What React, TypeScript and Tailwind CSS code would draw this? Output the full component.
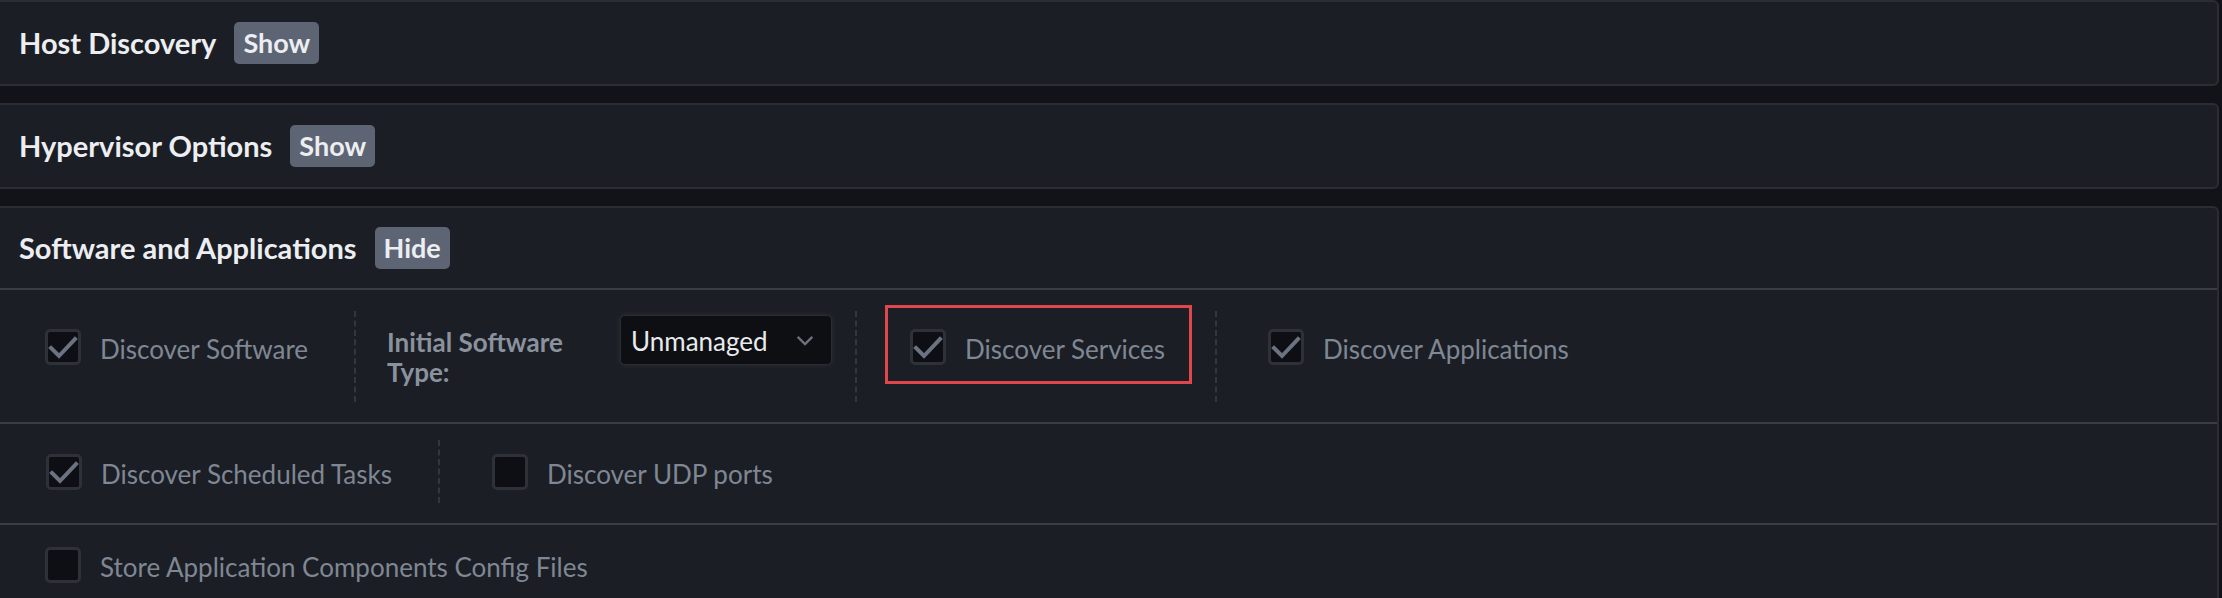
import { ReactNode } from 'react'

const labelFont = { fontFamily: 'Lato, "Noto Sans", sans-serif' }

function Badge({ children }: { children: ReactNode }) {
  return (
    <span className="inline-flex h-[42px] items-center rounded-[5px] bg-[#5d6474] px-[9px] text-[27px] font-bold text-[#eceef1]">
      {children}
    </span>
  )
}

function SectionHeader({ title, action, h = 'h-[82px]' }: { title: string; action: string; h?: string }) {
  return (
    <div className={`flex items-center gap-[18px] pl-[19px] ${h}`}>
      <h2 className="text-[29px] font-bold text-[#eceef1]">{title}</h2>
      <Badge>{action}</Badge>
    </div>
  )
}

function Checkbox({ checked }: { checked?: boolean }) {
  return (
    <span className="flex h-[36px] w-[36px] shrink-0 items-center justify-center rounded-[5px] border-[3px] border-[#2e3137] bg-[#0e0f14]">
      {checked && (
        <svg viewBox="0 0 30 30" className="h-[30px] w-[30px]">
          <polyline points="3,16 11,24 27,7" fill="none" stroke="#6b7280" strokeWidth="4" strokeLinecap="square" />
        </svg>
      )}
    </span>
  )
}

function CheckItem({ label, checked }: { label: string; checked?: boolean }) {
  return (
    <div className="flex items-center gap-[19px]">
      <Checkbox checked={checked} />
      <span className="pt-[6px] text-[26px] text-[#7f8793]">{label}</span>
    </div>
  )
}

function Divider({ h }: { h: string }) {
  return <div className={`w-0 self-start border-l-2 border-dashed border-[#33363c] ${h}`} />
}

export default function App() {
  return (
    <div className="h-[598px] w-[2222px] overflow-hidden bg-[#111318]" style={labelFont}>
      <div className="flex flex-col gap-[17px] pr-[3px]">
        <section className="rounded-r-[6px] border-y-2 border-r-2 border-[#2a2d34] bg-[#1b1e25]">
          <SectionHeader title="Host Discovery" action="Show" />
        </section>

        <section className="rounded-r-[6px] border-y-2 border-r-2 border-[#2a2d34] bg-[#1b1e25]">
          <SectionHeader title="Hypervisor Options" action="Show" />
        </section>

        <section className="rounded-tr-[6px] border-t-2 border-r-2 border-[#2a2d34] bg-[#1b1e25]">
          <SectionHeader title="Software and Applications" action="Hide" h="h-[80px]" />

          {/* row 1 */}
          <div className="flex h-[134px] items-start border-t-2 border-[#3a3d44] pt-[21px]">
            <div className="flex h-[91px] items-start pt-[13px] pl-[45px] pr-[46px]">
              <CheckItem label="Discover Software" checked />
            </div>
            <Divider h="h-[91px]" />
            <div className="flex items-start gap-[33px] pl-[31px] pr-[23px] pt-[4px]">
              <span className="w-[200px] pt-[12px] text-[26px] font-bold leading-[30px] text-[#8a929d]">
                Initial Software Type:
              </span>
              <div className="flex h-[50px] w-[212px] items-center justify-between rounded-[5px] border border-[#2a2c33] bg-[#0e0f13] pl-[10px] pr-[16px] shadow-[0_0_6px_rgba(255,255,255,0.08)]">
                <span className="pt-[3px] text-[26px] text-[#e8eaed]">Unmanaged</span>
                <svg viewBox="0 0 20 12" className="h-[11px] w-[20px]">
                  <polyline points="2,2 10,10 18,2" fill="none" stroke="#6b7280" strokeWidth="2.5" />
                </svg>
              </div>
            </div>
            <Divider h="h-[91px]" />
            <div className="ml-[28px] mr-[23px] -mt-[6px] flex h-[79px] w-[307px] items-start border-[3px] border-[#e0474c] pt-[16px] pl-[22px]">
              <CheckItem label="Discover Services" checked />
            </div>
            <Divider h="h-[91px]" />
            <div className="flex items-start pt-[13px] pl-[51px]">
              <CheckItem label="Discover Applications" checked />
            </div>
          </div>

          {/* row 2 */}
          <div className="flex h-[101px] items-start border-t-2 border-[#3a3d44] pt-[16px]">
            <div className="flex h-[63px] items-center pl-[46px] pr-[46px]">
              <CheckItem label="Discover Scheduled Tasks" checked />
            </div>
            <Divider h="h-[63px]" />
            <div className="flex h-[63px] items-center pl-[52px]">
              <CheckItem label="Discover UDP ports" />
            </div>
          </div>

          {/* row 3 */}
          <div className="flex h-[80px] items-start border-t-2 border-[#3a3d44] pt-[17px] pl-[45px]">
            <CheckItem label="Store Application Components Config Files" />
          </div>
        </section>
      </div>
    </div>
  )
}
